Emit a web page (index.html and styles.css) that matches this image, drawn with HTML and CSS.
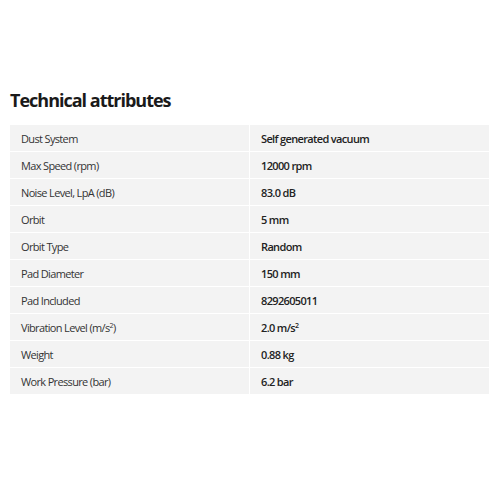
FILE: index.html
```html
<!DOCTYPE html>
<html>
<head>
<meta charset="utf-8">
<link rel="stylesheet" href="styles.css">
</head>
<body>
<section class="attrs">
  <h2 class="title">Technical attributes</h2>
  <table class="specs">
    <tbody>
      <tr><td class="name">Dust System</td><td class="value">Self generated vacuum</td></tr>
      <tr><td class="name">Max Speed (rpm)</td><td class="value">12000 rpm</td></tr>
      <tr><td class="name">Noise Level, LpA (dB)</td><td class="value">83.0 dB</td></tr>
      <tr><td class="name">Orbit</td><td class="value">5 mm</td></tr>
      <tr><td class="name">Orbit Type</td><td class="value">Random</td></tr>
      <tr><td class="name">Pad Diameter</td><td class="value">150 mm</td></tr>
      <tr><td class="name">Pad Included</td><td class="value">8292605011</td></tr>
      <tr><td class="name">Vibration Level (m/s<sup>2</sup>)</td><td class="value">2.0 m/s<sup>2</sup></td></tr>
      <tr><td class="name">Weight</td><td class="value">0.88 kg</td></tr>
      <tr><td class="name">Work Pressure (bar)</td><td class="value">6.2 bar</td></tr>
    </tbody>
  </table>
</section>
</body>
</html>
```
FILE: styles.css
```css
html, body {
  margin: 0;
  padding: 0;
  background: #ffffff;
}
body {
  font-family: "Open Sans", "Noto Sans", sans-serif;
  color: #222222;
}
.attrs {
  padding: 88px 11px 0 10px;
}
.title {
  margin: 0 0 12px 0;
  font-size: 18px;
  line-height: 25px;
  font-weight: 700;
  letter-spacing: -1px;
  color: #1a1a1a;
}
.specs {
  width: 479px;
  border-collapse: collapse;
  table-layout: fixed;
}
.specs td {
  background: #f3f3f3;
  height: 26px;
  padding: 0 11px;
  font-size: 11px;
  letter-spacing: -0.65px;
  border-bottom: 1px solid #ffffff;
  vertical-align: middle;
}
.specs td.name {
  width: 217px;
  border-right: 1px solid #ffffff;
  color: #333333;
}
.specs td.value {
  font-weight: 600;
  color: #222222;
}
.specs sup {
  font-size: 7px;
  line-height: 0;
  vertical-align: 4px;
}
```
